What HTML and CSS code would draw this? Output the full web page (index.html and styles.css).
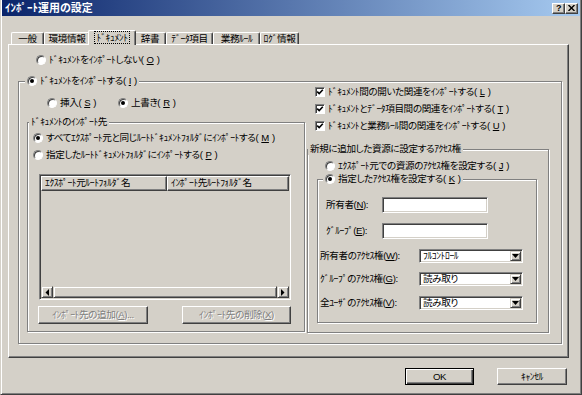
FILE: index.html
```html
<!DOCTYPE html>
<html lang="ja">
<head>
    <meta charset="UTF-8">
    <title>ｲﾝﾎﾟｰﾄ運用の設定</title>
    <link rel="stylesheet" href="styles.css">
</head>
<body>
    <div class="window">
        <div class="titlebar">
            <span class="title">ｲﾝﾎﾟｰﾄ運用の設定</span>
            <div class="cap-btns">
                <span class="cap-btn help">?</span>
                <span class="cap-btn">
                    <svg width="7" height="6" viewBox="0 0 7 6"><path d="M0.5 0 L6.5 6 M6.5 0 L0.5 6" stroke="#000" stroke-width="1.4"/></svg>
                </span>
            </div>
        </div>

        <div class="tabs">
            <div class="tab">一般</div>
            <div class="tab">環境情報</div>
            <div class="tab active"><span class="focus">ﾄﾞｷｭﾒﾝﾄ</span></div>
            <div class="tab">辞書</div>
            <div class="tab">ﾃﾞｰﾀ項目</div>
            <div class="tab">業務ﾙｰﾙ</div>
            <div class="tab">ﾛｸﾞ情報</div>
        </div>

        <div class="panel">
            <div class="opt opt-none"><span class="radio"></span>ﾄﾞｷｭﾒﾝﾄをｲﾝﾎﾟｰﾄしない(<u>O</u>)</div>

            <div class="group group-import">
                <div class="group-cap"><span class="radio on"></span>ﾄﾞｷｭﾒﾝﾄをｲﾝﾎﾟｰﾄする(<u>I</u>)</div>
                <div class="import-body">
                    <div class="col-left">
                        <div class="mode-row">
                            <div class="opt"><span class="radio"></span>挿入(<u>S</u>)</div>
                            <div class="opt"><span class="radio on"></span>上書き(<u>R</u>)</div>
                        </div>

                        <div class="group group-dest">
                            <div class="group-cap">ﾄﾞｷｭﾒﾝﾄのｲﾝﾎﾟｰﾄ先</div>
                            <div class="opt dest-opt first"><span class="radio on"></span>すべてｴｸｽﾎﾟｰﾄ元と同じﾙｰﾄﾄﾞｷｭﾒﾝﾄﾌｫﾙﾀﾞにｲﾝﾎﾟｰﾄする(<u>M</u>)</div>
                            <div class="opt dest-opt"><span class="radio"></span>指定したﾙｰﾄﾄﾞｷｭﾒﾝﾄﾌｫﾙﾀﾞにｲﾝﾎﾟｰﾄする(<u>P</u>)</div>

                            <div class="listview">
                                <div class="lv-header">
                                    <div class="lv-col">ｴｸｽﾎﾟｰﾄ元ﾙｰﾄﾌｫﾙﾀﾞ名</div>
                                    <div class="lv-col">ｲﾝﾎﾟｰﾄ先ﾙｰﾄﾌｫﾙﾀﾞ名</div>
                                </div>
                                <div class="lv-body"></div>
                                <div class="hscroll">
                                    <span class="sb-btn">
                                        <svg width="4" height="7" viewBox="0 0 4 7"><polygon points="4,0 4,7 0.5,3.5" fill="#000"/></svg>
                                    </span>
                                    <span class="sb-thumb"></span>
                                    <span class="sb-btn">
                                        <svg width="4" height="7" viewBox="0 0 4 7"><polygon points="0,0 0,7 3.5,3.5" fill="#000"/></svg>
                                    </span>
                                </div>
                            </div>

                            <div class="dest-btns">
                                <button class="btn disabled btn-add">ｲﾝﾎﾟｰﾄ先の追加(<u>A</u>)...</button>
                                <button class="btn disabled btn-del">ｲﾝﾎﾟｰﾄ先の削除(<u>X</u>)</button>
                            </div>
                        </div>
                    </div>

                    <div class="col-right">
                        <div class="opt check-opt first"><span class="check"><svg width="8" height="8" viewBox="0 0 8 8"><path d="M1.2 3.6 L3.2 5.6 L6.8 1.8" fill="none" stroke="#000" stroke-width="1.6"/></svg></span>ﾄﾞｷｭﾒﾝﾄ間の開いた関連をｲﾝﾎﾟｰﾄする(<u>L</u>)</div>
                        <div class="opt check-opt"><span class="check"><svg width="8" height="8" viewBox="0 0 8 8"><path d="M1.2 3.6 L3.2 5.6 L6.8 1.8" fill="none" stroke="#000" stroke-width="1.6"/></svg></span>ﾄﾞｷｭﾒﾝﾄとﾃﾞｰﾀ項目間の関連をｲﾝﾎﾟｰﾄする(<u>T</u>)</div>
                        <div class="opt check-opt"><span class="check"><svg width="8" height="8" viewBox="0 0 8 8"><path d="M1.2 3.6 L3.2 5.6 L6.8 1.8" fill="none" stroke="#000" stroke-width="1.6"/></svg></span>ﾄﾞｷｭﾒﾝﾄと業務ﾙｰﾙ間の関連をｲﾝﾎﾟｰﾄする(<u>U</u>)</div>

                        <div class="group group-acl">
                            <div class="group-cap">新規に追加した資源に設定するｱｸｾｽ権</div>
                            <div class="opt acl-src"><span class="radio"></span>ｴｸｽﾎﾟｰﾄ元での資源のｱｸｾｽ権を設定する(<u>J</u>)</div>

                            <div class="group group-k">
                                <div class="group-cap"><span class="radio on"></span>指定したｱｸｾｽ権を設定する(<u>K</u>)</div>

                                <div class="field-row first">
                                    <span class="field-label">所有者(<u>N</u>):</span>
                                    <span class="textbox"></span>
                                </div>
                                <div class="field-row">
                                    <span class="field-label">ｸﾞﾙｰﾌﾟ(<u>E</u>):</span>
                                    <span class="textbox"></span>
                                </div>

                                <div class="combo-row first">
                                    <span class="combo-label">所有者のｱｸｾｽ権(<u>W</u>):</span>
                                    <span class="combo"><span class="combo-text">ﾌﾙｺﾝﾄﾛｰﾙ</span><span class="combo-btn"><svg width="7" height="4" viewBox="0 0 7 4"><polygon points="0,0 7,0 3.5,4" fill="#000"/></svg></span></span>
                                </div>
                                <div class="combo-row">
                                    <span class="combo-label">ｸﾞﾙｰﾌﾟのｱｸｾｽ権(<u>G</u>):</span>
                                    <span class="combo"><span class="combo-text">読み取り</span><span class="combo-btn"><svg width="7" height="4" viewBox="0 0 7 4"><polygon points="0,0 7,0 3.5,4" fill="#000"/></svg></span></span>
                                </div>
                                <div class="combo-row last">
                                    <span class="combo-label">全ﾕｰｻﾞのｱｸｾｽ権(<u>V</u>):</span>
                                    <span class="combo"><span class="combo-text">読み取り</span><span class="combo-btn"><svg width="7" height="4" viewBox="0 0 7 4"><polygon points="0,0 7,0 3.5,4" fill="#000"/></svg></span></span>
                                </div>
                            </div>
                        </div>
                    </div>
                </div>
            </div>
        </div>

        <div class="footer">
            <button class="btn btn-default">OK</button>
            <button class="btn btn-cancel">ｷｬﾝｾﾙ</button>
        </div>
    </div>
</body>
</html>
```

FILE: styles.css
```css
* {
    margin: 0;
    padding: 0;
    box-sizing: border-box;
}

body {
    font-family: "Liberation Sans", "Noto Sans CJK JP", sans-serif;
    font-size: 9.6px;
    line-height: 12px;
    letter-spacing: -0.4px;
    font-feature-settings: "palt";
    color: #000;
    background: #d4d0c8;
    text-autospace: no-autospace;
}

u {
    text-decoration: underline;
    text-underline-offset: 1px;
}

/* window frame */

.window {
    width: 582px;
    height: 395px;
    border-left: 1px solid #d4d0c8;
    border-right: 1px solid #404040;
    border-bottom: 1px solid #404040;
    box-shadow: inset 1px 0 #fff, inset -1px -1px #808080;
    display: flex;
    flex-direction: column;
}

.titlebar {
    height: 16px;
    margin: 0 1px;
    padding: 0 2px 0 3px;
    background: linear-gradient(to right, #0a246a, #a6caf0);
    display: flex;
    align-items: center;
    justify-content: space-between;
}

.title {
    color: #fff;
    font-weight: bold;
    font-size: 11px;
    letter-spacing: 0;
}

.cap-btns {
    display: flex;
}

.cap-btn {
    width: 13px;
    height: 11px;
    background: #d4d0c8;
    border: 1px solid;
    border-color: #fff #404040 #404040 #fff;
    box-shadow: inset -1px -1px #808080;
    display: flex;
    align-items: center;
    justify-content: center;
}

.cap-btn.help {
    font-weight: bold;
    font-size: 9px;
    line-height: 9px;
}

/* tabs */

.tabs {
    height: 14px;
    margin-top: 14px;
    padding-left: 10px;
    display: flex;
    align-items: flex-end;
}

.tab {
    height: 12px;
    border-top: 1px solid #fff;
    border-left: 1px solid #fff;
    border-right: 1px solid #404040;
    border-radius: 2px 2px 0 0;
    box-shadow: inset -1px 0 #808080;
    display: flex;
    align-items: center;
    justify-content: center;
}

.tab:nth-child(1) { width: 33px; }
.tab:nth-child(2) { width: 46px; }
.tab:nth-child(3) { width: 48px; }
.tab:nth-child(4) { width: 32px; }
.tab:nth-child(5) { width: 47px; }
.tab:nth-child(6) { width: 47px; }
.tab:nth-child(7) { width: 39px; }

.tab.active {
    height: 15px;
    margin: 0 -2px -1px;
    padding-bottom: 2px;
    background: #d4d0c8;
    position: relative;
    z-index: 1;
}

.focus {
    outline: 1px dotted #000;
    outline-offset: 0;
    padding: 0 1px;
    line-height: 11px;
}

/* tab page */

.panel {
    width: 561px;
    height: 314px;
    margin-left: 7px;
    padding: 9px 0 0 9px;
    border-top: 1px solid #fff;
    border-left: 1px solid #fff;
    border-right: 1px solid #404040;
    border-bottom: 1px solid #404040;
    box-shadow: inset -1px -1px #808080;
}

.opt {
    height: 12px;
    display: flex;
    align-items: center;
    gap: 3px;
    white-space: nowrap;
}

.opt-none {
    margin-left: 18px;
}

.radio {
    width: 10px;
    height: 10px;
    flex: none;
    border-radius: 50%;
    background: #fff;
    border: 1px solid;
    border-color: #808080 #fff #fff #808080;
    box-shadow: inset 1px 1px #404040;
    display: flex;
    align-items: center;
    justify-content: center;
}

.radio.on::after {
    content: "";
    width: 4px;
    height: 4px;
    border-radius: 50%;
    background: #000;
}

.check {
    width: 10px;
    height: 10px;
    flex: none;
    background: #fff;
    border: 1px solid;
    border-color: #808080 #fff #fff #808080;
    box-shadow: inset 1px 1px #404040;
    display: flex;
    align-items: center;
    justify-content: center;
}

/* group boxes */

.group {
    border: 1px solid #808080;
    box-shadow: inset 1px 1px #fff, 1px 1px #fff;
}

.group-cap {
    width: fit-content;
    height: 12px;
    margin-top: -7px;
    margin-bottom: -4px;
    padding: 0 2px;
    background: #d4d0c8;
    display: flex;
    align-items: center;
    gap: 3px;
    white-space: nowrap;
}

.group-import {
    width: 544px;
    height: 263px;
    margin-top: 15px;
}

.group-import > .group-cap {
    margin-left: 6px;
}

.import-body {
    display: flex;
}

.col-left {
    width: 278px;
    margin-left: 8px;
}

.col-right {
    width: 242px;
    margin-left: 2px;
}

.mode-row {
    margin-top: 14px;
    margin-left: 20px;
    display: flex;
}

.mode-row .opt:first-child {
    width: 71px;
}

.group-dest {
    width: 278px;
    height: 210px;
    margin-top: 13px;
}

.group-dest > .group-cap {
    margin-left: 1px;
}

.dest-opt {
    margin-left: 5px;
    margin-top: 5px;
}

.dest-opt.first {
    margin-top: 8px;
}

/* list view */

.listview {
    width: 252px;
    height: 126px;
    margin: 13px 0 0 11px;
    padding: 1px;
    border: 1px solid;
    border-color: #808080 #fff #fff #808080;
    box-shadow: inset 1px 1px #404040, inset -1px -1px #d4d0c8;
    display: flex;
    flex-direction: column;
}

.lv-header {
    height: 15px;
    display: flex;
}

.lv-col {
    width: 126px;
    padding-left: 3px;
    border-top: 1px solid #fff;
    border-left: 1px solid #fff;
    border-right: 1px solid #404040;
    border-bottom: 1px solid #404040;
    box-shadow: inset -1px -1px #808080;
    line-height: 12px;
    white-space: nowrap;
    overflow: hidden;
}

.lv-col + .lv-col {
    flex: 1;
}

.lv-body {
    flex: 1;
}

.hscroll {
    height: 12px;
    display: flex;
}

.sb-btn,
.sb-thumb {
    border-top: 1px solid #d4d0c8;
    border-left: 1px solid #d4d0c8;
    border-right: 1px solid #404040;
    border-bottom: 1px solid #404040;
    box-shadow: inset 1px 1px #fff, inset -1px -1px #808080;
}

.sb-btn {
    width: 12px;
    display: flex;
    align-items: center;
    justify-content: center;
}

.sb-thumb {
    flex: 1;
}

.dest-btns {
    margin: 6px 0 0 10px;
    display: flex;
}

/* buttons */

.btn {
    height: 18px;
    font: inherit;
    letter-spacing: inherit;
    color: #000;
    background: #d4d0c8;
    border: 1px solid;
    border-color: #fff #404040 #404040 #fff;
    box-shadow: inset -1px -1px #808080;
    white-space: nowrap;
}

.btn.disabled {
    color: #808080;
    text-shadow: 1px 1px 0 #fff;
}

.btn-add {
    width: 110px;
}

.btn-del {
    width: 109px;
    margin-left: 34px;
}

/* checks and access rights */

.check-opt {
    margin-left: 8px;
    margin-top: 5px;
}

.check-opt.first {
    margin-top: 3px;
}

.group-acl {
    width: 242px;
    height: 184px;
    margin-top: 17px;
}

.acl-src {
    margin: 9px 0 0 17px;
}

.group-k {
    width: 220px;
    height: 144px;
    margin: 7px 0 0 9px;
}

.group-k > .group-cap {
    margin-left: 5px;
}

.field-row {
    height: 16px;
    margin: 10px 0 0 8px;
    display: flex;
    align-items: center;
}

.field-row.first {
    margin-top: 16px;
}

.field-label {
    width: 56px;
    white-space: nowrap;
}

.textbox {
    width: 106px;
    height: 16px;
    background: #fff;
    border: 1px solid;
    border-color: #808080 #fff #fff #808080;
    box-shadow: inset 1px 1px #404040, inset -1px -1px #d4d0c8;
}

.combo-row {
    height: 14px;
    margin: 9px 0 0 2px;
    display: flex;
    align-items: center;
}

.combo-row.first,
.combo-row.last {
    margin-top: 10px;
}

.combo-label {
    width: 99px;
    white-space: nowrap;
}

.combo {
    width: 104px;
    height: 14px;
    padding: 1px;
    background: #fff;
    border: 1px solid;
    border-color: #808080 #fff #fff #808080;
    box-shadow: inset 1px 1px #404040, inset -1px -1px #d4d0c8;
    display: flex;
}

.combo-text {
    flex: 1;
    padding-left: 2px;
    line-height: 10px;
    white-space: nowrap;
}

.combo-btn {
    width: 11px;
    background: #d4d0c8;
    border-top: 1px solid #d4d0c8;
    border-left: 1px solid #d4d0c8;
    border-right: 1px solid #404040;
    border-bottom: 1px solid #404040;
    box-shadow: inset 1px 1px #fff, inset -1px -1px #808080;
    display: flex;
    align-items: center;
    justify-content: center;
}

/* dialog buttons */

.footer {
    margin-top: 10px;
    padding-right: 14px;
    display: flex;
    justify-content: flex-end;
    gap: 23px;
}

.footer .btn {
    height: 17px;
}

.btn-default {
    width: 69px;
    border-color: #000;
    box-shadow: inset 1px 1px #fff, inset -1px -1px #404040, inset -2px -2px #808080;
}

.btn-cancel {
    width: 70px;
}
```
